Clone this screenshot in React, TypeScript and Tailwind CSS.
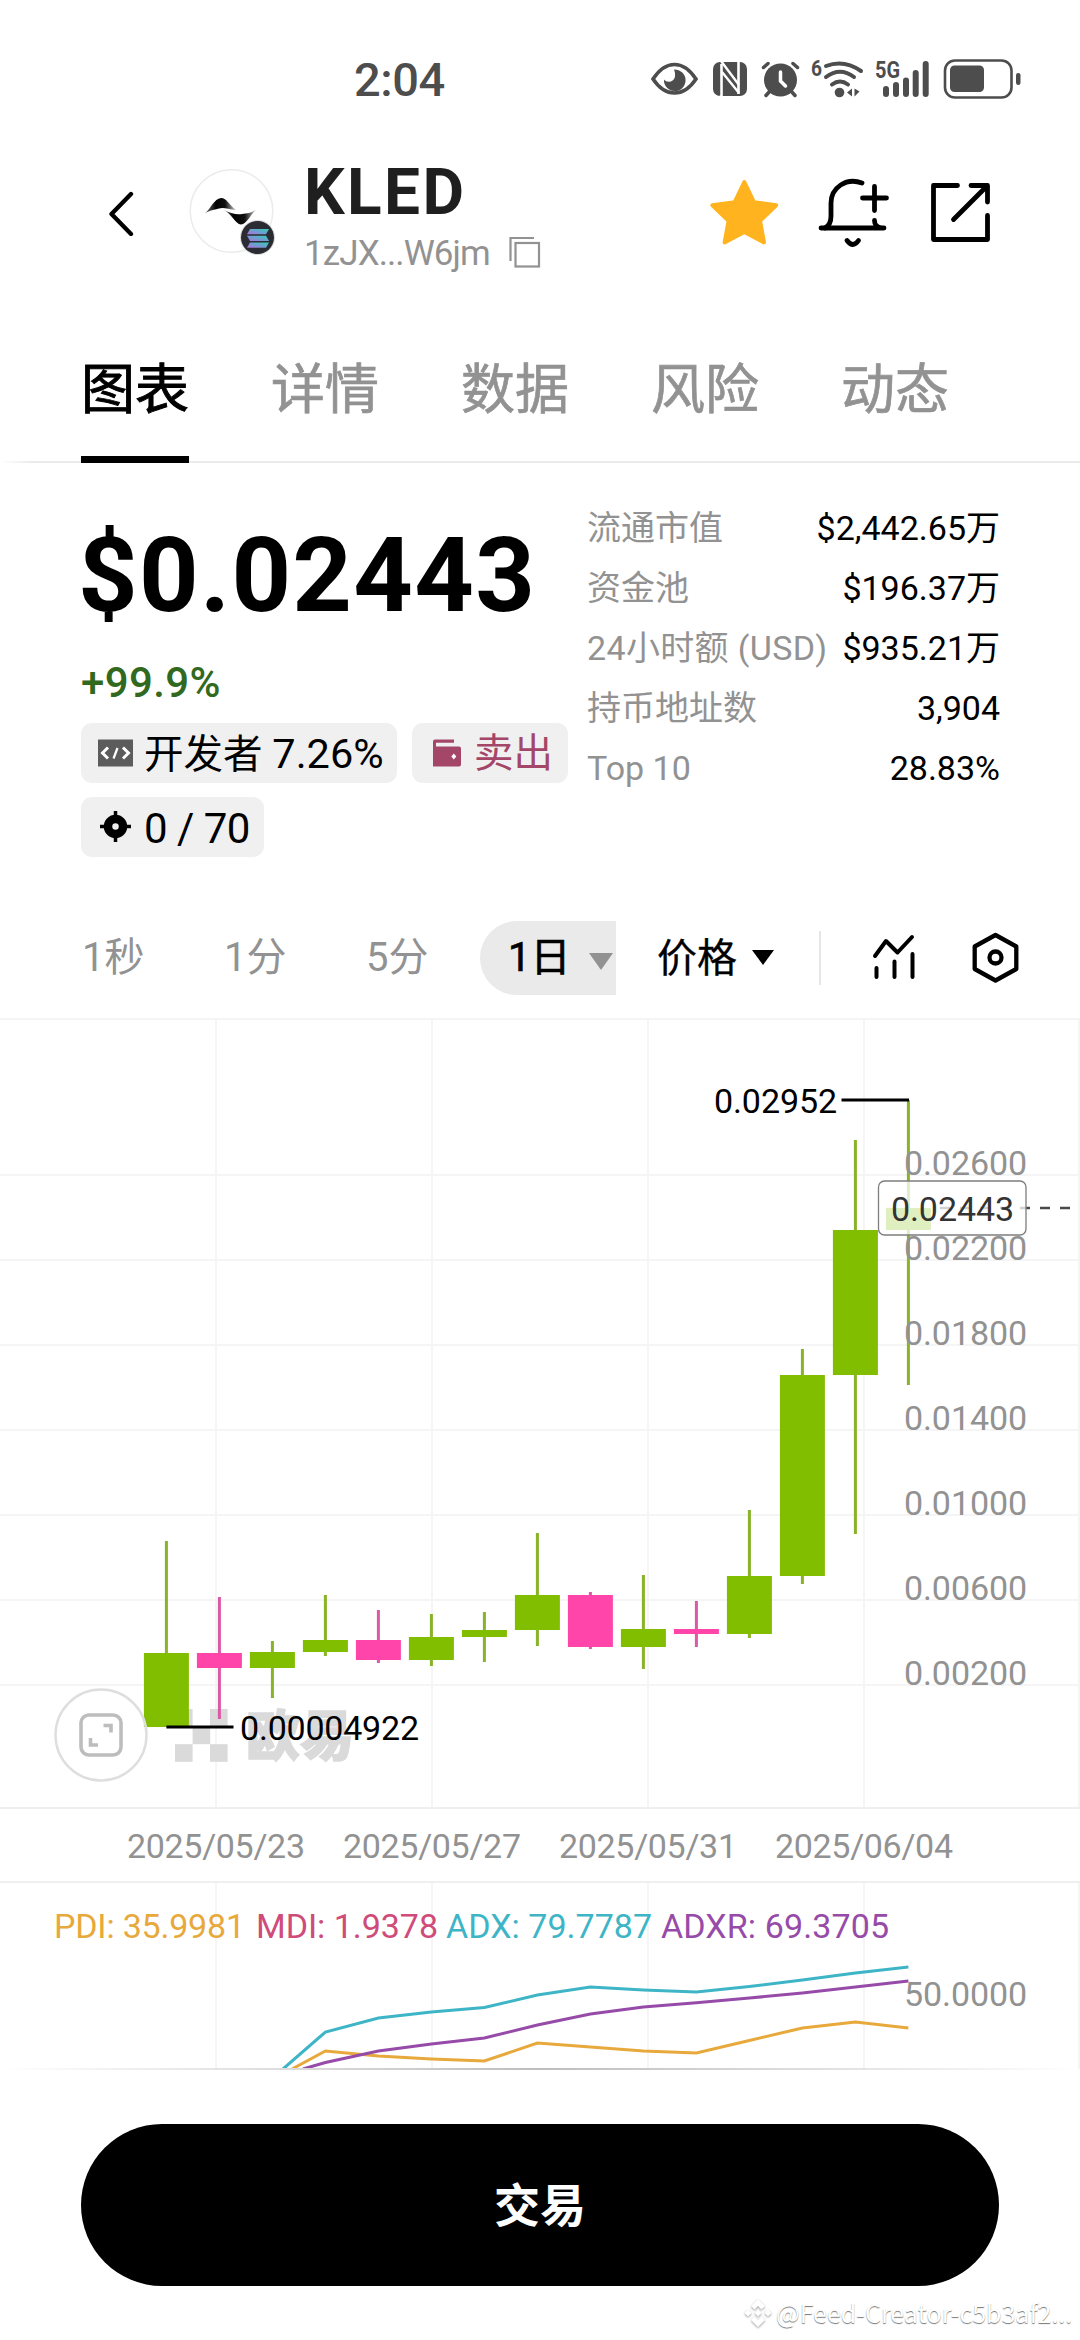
import type { ReactNode } from 'react';

const tabs = ['图表', '详情', '数据', '风险', '动态'];

const stats: { label: ReactNode; value: string; unit?: string }[] = [
  { label: '流通市值', value: '$2,442.65', unit: '万' },
  { label: '资金池', value: '$196.37', unit: '万' },
  { label: <span className="tracking-[0.35px]">24小时额 (USD)</span>, value: '$935.21', unit: '万' },
  { label: '持币地址数', value: '3,904' },
  { label: 'Top 10', value: '28.83%' },
];

// high, body top, body bottom, low, up
const candles: [number, number, number, number, boolean][] = [
  [1541, 1653, 1727, 1727, true],
  [1597, 1653, 1668, 1719, false],
  [1641, 1652, 1668, 1698, true],
  [1595, 1640, 1652, 1656, true],
  [1610, 1640, 1660, 1663, false],
  [1614, 1637, 1660, 1666, true],
  [1612, 1630, 1637, 1662, true],
  [1533, 1595, 1630, 1646, true],
  [1592, 1595, 1647, 1649, false],
  [1575, 1629, 1647, 1669, true],
  [1601, 1629, 1634, 1647, false],
  [1510, 1576, 1634, 1638, true],
  [1349, 1375, 1576, 1584, true],
  [1140, 1230, 1375, 1534, true],
  [1100, 1208, 1230, 1385, true],
];

const candleX = (i: number) => 166.4 + i * 53;

const priceTicks = ['0.02600', '0.02200', '0.01800', '0.01400', '0.01000', '0.00600', '0.00200'];
const gridX = [216, 432, 648, 864, 1079];
const dates = ['2025/05/23', '2025/05/27', '2025/05/31', '2025/06/04'];

const legend = [
  { text: 'PDI: 35.9981', x: 54, width: 191, color: '#e8a93c' },
  { text: 'MDI: 1.9378', x: 256, width: 182, color: '#cf4b79' },
  { text: 'ADX: 79.7787', x: 446, width: 206, color: '#3eb5c6' },
  { text: 'ADXR: 69.3705', x: 661, width: 228, color: '#974ba8' },
];

const adx = [2032, 2018, 2012, 2007.5, 1995, 1987, 1990, 1992, 1986.5, 1980, 1973, 1967];
const adxr = [2062.5, 2051, 2044, 2038, 2025, 2014, 2007, 2002.7, 1998, 1993, 1987, 1981];
const pdi = [2051, 2056, 2059, 2061, 2043, 2047, 2051, 2053, 2040.5, 2028, 2022, 2028];

const toPoints = (startX: number, ys: number[]) =>
  [`${startX},2069`, ...ys.map((y, i) => `${candleX(i + 3)},${y}`)].join(' ');

function StatusBar() {
  return (
    <div className="mt-[53px] flex h-[54px] items-center pl-[354px] text-[#4d4d4d]">
      <div className="w-[297px] text-[47px] font-medium leading-[54px] tracking-[-0.400px]">2:04</div>
      <svg className="h-[54px] w-[48px]" viewBox="651 53 48 54" fill="none">
        <path d="M653 79c6-9 13-14.500 21.500-14.500S690 70 696 79c-6 9-13 14-21.500 14S659 88 653 79Z" stroke="currentColor" strokeWidth="3.600" />
        <path d="M674 69.500a10.800 10.800 0 1 1-10 10c3 4 10 2.500 11-3 .4-3-.3-5-1-7Z" fill="currentColor" />
      </svg>
      <svg className="ml-[13px] h-[54px] w-[36px]" viewBox="712 53 36 54">
        <rect x="713" y="62" width="34" height="34" rx="7" fill="currentColor" />
        <path d="M721.500 64v32l-1.500.5M738.500 62v32" stroke="#fff" strokeWidth="2.600" />
        <path d="M721 61l18 24M722 72l17 21" stroke="#fff" strokeWidth="2.400" />
      </svg>
      <svg className="ml-[13px] h-[54px] w-[40px]" viewBox="761 53 40 54" fill="none" stroke="currentColor" strokeLinecap="round">
        <circle cx="780.500" cy="80" r="16.500" fill="currentColor" stroke="none" />
        <path d="M763.500 67.500l4.500-4M797.500 67.500l-4.500-4M770 91l-4 4.500M791 91l4 4.500" strokeWidth="3.500" />
        <path d="M780.500 72v9l5 5" stroke="#fff" strokeWidth="3.500" />
      </svg>
      <svg className="ml-[10px] h-[54px] w-[54px]" viewBox="811 53 54 54" fill="none" stroke="currentColor" strokeWidth="4" strokeLinecap="round">
        <text x="811" y="76" fontSize="22" fontWeight="700" fill="currentColor" stroke="none" textLength="11" lengthAdjust="spacingAndGlyphs">6</text>
        <path d="M826 66q18-7 35 5M826 77q14-10.500 28 0M832 84.500q8-6 16 0" />
        <circle cx="839.500" cy="92.500" r="4.800" fill="currentColor" stroke="none" />
        <path d="M852 88.500v8l-5-4zM854.500 88.500v8l5-5z" fill="currentColor" stroke="none" />
      </svg>
      <svg className="ml-[10px] h-[54px] w-[55px]" viewBox="875 53 55 54" fill="currentColor">
        <text x="875" y="78" fontSize="23" fontWeight="700" textLength="25" lengthAdjust="spacingAndGlyphs">5G</text>
        <rect x="883" y="86" width="6" height="11" rx="3" />
        <rect x="893" y="82" width="6" height="15" rx="3" />
        <rect x="903" y="77.500" width="6" height="19.500" rx="3" />
        <rect x="912.700" y="70" width="6" height="27" rx="3" />
        <rect x="922.700" y="61" width="6" height="36" rx="3" />
      </svg>
      <svg className="ml-[13px] h-[54px] w-[78px]" viewBox="943 53 78 54" fill="none">
        <rect x="945" y="60.500" width="66.500" height="37" rx="10" stroke="currentColor" strokeWidth="2.600" />
        <rect x="950" y="65.500" width="34" height="26.500" rx="4.500" fill="currentColor" />
        <rect x="1016" y="73" width="4.500" height="12" rx="2.200" fill="currentColor" />
      </svg>
    </div>
  );
}

function TokenLogo() {
  return (
    <svg className="h-[90px] w-[90px]" viewBox="187 165 90 90" fill="none">
      <defs>
        <linearGradient id="sol" x1="0" y1="1" x2="1" y2="0">
          <stop offset="0" stopColor="#b26fd8" />
          <stop offset="0.500" stopColor="#6c9fd0" />
          <stop offset="1" stopColor="#2fd0b5" />
        </linearGradient>
        <linearGradient id="waveA" x1="0" y1="0" x2="1" y2="0">
          <stop offset="0" stopColor="#777" />
          <stop offset="0.350" stopColor="#000" />
          <stop offset="0.650" stopColor="#111" />
          <stop offset="1" stopColor="#ccc" />
        </linearGradient>
        <linearGradient id="waveB" x1="1" y1="0" x2="0" y2="0">
          <stop offset="0" stopColor="#ccc" />
          <stop offset="0.350" stopColor="#111" />
          <stop offset="0.700" stopColor="#000" />
          <stop offset="1" stopColor="#666" />
        </linearGradient>
      </defs>
      <circle cx="231.500" cy="211" r="41.300" fill="#fff" stroke="#ebebeb" strokeWidth="1.500" />
      <path d="M205 213.500C211 208 214 199 221 198c6 0 8 7 15 12-8-1-13-3-17-1.500-5 1.500-9 1.500-14 5Z" fill="url(#waveA)" />
      <path d="M224 210c6 3 12 5 18 4 5-.5 9-1 14-4-6 5-9 14-15 14.500C235 224 232 214 224 210Z" fill="url(#waveB)" />
      <circle cx="257.500" cy="237.500" r="17.500" fill="#d9d9d9" />
      <circle cx="257.500" cy="237.500" r="16.500" fill="#2a2b33" />
      <g fill="url(#sol)">
        <path d="M250 229h19l-3 5.300h-19z" />
        <path d="M247 235.700h19l3 5.300h-19z" />
        <path d="M250 242.400h19l-3 5.300h-19z" />
      </g>
    </svg>
  );
}

function Header() {
  return (
    <header className="mt-[53px] flex h-[100px] items-center pl-[105px]">
      <svg className="h-[52px] w-[32px]" viewBox="105 184 32 52" fill="none" stroke="#000" strokeWidth="4.300" strokeLinecap="round" strokeLinejoin="round">
        <path d="M131 194l-19.500 20L131 234" />
      </svg>
      <div className="ml-[50px]">
        <TokenLogo />
      </div>
      <div className="ml-[27px] mt-[22px] w-[279px]">
        <div className="h-[66px] text-[64px] font-bold leading-[66px] tracking-[2.400px] text-[#1f1f1f]">KLED</div>
        <div className="flex h-[56px] items-center text-[#929292]">
          <span className="w-[204px] text-[35px] leading-[56px] tracking-[-0.900px]">1zJX...W6jm</span>
          <svg className="-mt-[4px] h-[34px] w-[34px]" viewBox="508 236 34 34" fill="none" stroke="currentColor" strokeWidth="2.200">
            <path d="M510.500 262v-23H534" />
            <rect x="515.500" y="244" width="23.500" height="23.500" />
          </svg>
        </div>
      </div>
      <svg className="ml-[123px] h-[80px] w-[76px]" viewBox="704 170 76 80">
        <path d="M742.300 182l9.600 20.200 22.300 3-16.200 15.600 4 21.600-19.700-10.300-19.700 10.300 4-21.600-16.200-15.600 22.300-3z" fill="#ffb31f" stroke="#ffb31f" strokeWidth="4" strokeLinejoin="round" />
      </svg>
      <svg className="ml-[34px] h-[80px] w-[76px]" viewBox="814 170 76 80" fill="none" stroke="#000" strokeWidth="4.800" strokeLinecap="round" strokeLinejoin="round">
        <path d="M860 183c-16-6-31 5-31 20v13c0 6-2 10-6 12" />
        <path d="M819 228h63M872.500 220.500c0 4 2.500 7 7 7.500" />
        <path d="M872.500 186.500v24M860.500 198h24" />
        <path d="M845 240.500q6 8 11.500 0" />
      </svg>
      <svg className="ml-[36px] h-[80px] w-[66px]" viewBox="926 170 66 80" fill="none" stroke="#000" strokeWidth="4.800" strokeLinecap="round" strokeLinejoin="round">
        <path d="M955.500 185.500h-24v54h54v-24" />
        <path d="M969 185.500h16.500v16.500M985 186l-33.500 33.500" />
      </svg>
    </header>
  );
}

function TabBar() {
  return (
    <nav className="relative mt-[90px] flex h-[113px] gap-[82px] pl-[81px]">
      {tabs.map((tab, i) => (
        <div key={tab} className="flex h-full w-[108px] flex-col justify-between">
          <span
            className={
              i === 0
                ? 'text-[54px] leading-[82px] text-black [-webkit-text-stroke:0.900px_#000]'
                : 'text-[54px] leading-[82px] text-[#929292] [-webkit-text-stroke:0.700px_#929292]'
            }
          >
            {tab}
          </span>
          {i === 0 && <span className="relative z-10 h-[7px] w-[108px] bg-black" />}
        </div>
      ))}
      <div className="absolute bottom-0 left-0 h-[2px] w-full bg-linear-to-r from-transparent via-[#ebebeb] via-[3%] to-[#ebebeb]" />
    </nav>
  );
}

function Summary() {
  return (
    <section className="flex h-[458px] pl-[81px]">
      <div className="w-[506px]">
        <div className="-ml-[3px] mt-[57px] h-[112px] whitespace-nowrap text-[104px] font-bold leading-[112px] tracking-[1.300px] text-black">$0.02443</div>
        <div className="mt-[26px] h-[50px] text-[42px] font-medium leading-[50px] tracking-[0.400px] text-[#31691e]">+99.9%</div>
        <div className="mt-[15px] flex gap-[15px]">
          <div className="flex h-[60px] w-[316px] items-center rounded-[11px] bg-[#f0f0f0] pl-[17px]">
            <svg className="h-[30px] w-[35px]" viewBox="0 0 35 30" fill="none">
              <rect y="1.500" width="35" height="27" fill="#5c5c5c" />
              <path d="M10 9.500L4.500 15l5.500 5.500M25 9.500l5.500 5.500-5.500 5.500" stroke="#fff" strokeWidth="3" />
              <path d="M19.500 10l-4 10.500" stroke="#fff" strokeWidth="2.200" />
            </svg>
            <span className="ml-[11px] mt-[2px] whitespace-nowrap text-[39.500px] leading-[60px] text-black">
              开发者 <span className="text-[41.500px]">7.26%</span>
            </span>
          </div>
          <div className="flex h-[60px] w-[156px] items-center rounded-[11px] bg-[#f0f0f0] pl-[20px] text-[#a34668]">
            <svg className="h-[30px] w-[30px]" viewBox="0 0 30 30">
              <path d="M1 3.500A2 2 0 0 1 3 1.500h19v3.300H4v3.700h23a2 2 0 0 1 2 2v16a2 2 0 0 1-2 2H1z" fill="currentColor" />
              <path d="M21.800 15.500l2.500 3-2.500 3-2.500-3z" fill="#fff" />
            </svg>
            <span className="ml-[12px] mt-[2px] text-[39.500px] leading-[60px]">卖出</span>
          </div>
        </div>
        <div className="mt-[14px] flex h-[60px] w-[183px] items-center rounded-[11px] bg-[#f0f0f0] pl-[18px]">
          <svg className="h-[34px] w-[34px]" viewBox="0 0 34 34" fill="none" stroke="#000">
            <circle cx="16.500" cy="16.500" r="7.500" strokeWidth="8.500" />
            <path d="M16.500 1v6M16.500 26v6M1 16.500h6M26 16.500h6" strokeWidth="3.500" />
          </svg>
          <span className="ml-[11px] mt-[3px] whitespace-nowrap text-[42px] leading-[60px] tracking-[-0.500px] text-black">0 / 70</span>
        </div>
      </div>
      <div className="mt-[35px] w-[413px]">
        {stats.map((row) => (
          <div key={row.value} className="flex h-[60px] items-center justify-between whitespace-nowrap text-[34px] leading-[60px]">
            <span className="text-[#929292]">{row.label}</span>
            <span className="text-black">
              {row.value}
              {row.unit}
            </span>
          </div>
        ))}
      </div>
    </section>
  );
}

function IntervalBar() {
  return (
    <div className="flex h-[74px] items-center text-[40px] leading-[74px] text-[#929292]">
      <span className="ml-[82px] w-[142px]">1秒</span>
      <span className="w-[142px]">1分</span>
      <span className="w-[114px]">5分</span>
      <div className="flex h-[74px] w-[136px] items-center rounded-l-full bg-[#eaeaea] pl-[28px]">
        <span className="w-[81px] text-black [-webkit-text-stroke:0.700px_#000]">1日</span>
        <svg className="mt-[7px] h-[18px] w-[24px]" viewBox="0 0 24 18">
          <path d="M0 0h24L12 17z" fill="#929292" />
        </svg>
      </div>
      <span className="ml-[41px] mt-[2px] w-[95px] text-black [-webkit-text-stroke:0.300px_#000]">价格</span>
      <svg className="h-[16px] w-[22px]" viewBox="0 0 22 16">
        <path d="M0 0h22L11 15z" fill="#000" />
      </svg>
      <div className="ml-[45px] h-[54px] w-[2px] bg-[#e6e6e6]" />
      <svg className="ml-[49px] h-[54px] w-[48px]" viewBox="870 931 48 54" fill="none" stroke="#000" strokeWidth="4" strokeLinecap="round" strokeLinejoin="round">
        <path d="M875 956l11-15 11.500 11.500L912 937M876.500 968v9M894.500 961.500v15.500M912.500 954v23" />
      </svg>
      <svg className="ml-[51px] h-[54px] w-[54px]" viewBox="969 931 54 54" fill="none" stroke="#000" strokeWidth="4.300" strokeLinejoin="round">
        <path d="M995.500 935l20.800 11.500v22.500l-20.800 11.500L974.700 969v-22.500z" />
        <circle cx="995.500" cy="957.500" r="6" />
      </svg>
    </div>
  );
}

function Chart() {
  return (
    <svg className="mt-[23px] block h-[1054px] w-[1080px]" viewBox="0 1018 1080 1054" fontSize="34">
      <defs>
        <linearGradient id="fade" x1="0" y1="0" x2="1" y2="0">
          <stop offset="0" stopColor="#bdbdbd" stopOpacity="0" />
          <stop offset="0.500" stopColor="#bdbdbd" />
          <stop offset="1" stopColor="#bdbdbd" stopOpacity="0" />
        </linearGradient>
        <clipPath id="indicator">
          <rect x="0" y="1882" width="1080" height="186" />
        </clipPath>
      </defs>

      {/* grid */}
      <g fill="#f5f5f5">
        {[1018, ...priceTicks.map((_, i) => 1174 + i * 85)].map((y) => (
          <rect key={y} x="0" y={y} width="1080" height="2" />
        ))}
        {gridX.map((x) => (
          <g key={x}>
            <rect x={x - 1} y="1019" width="2" height="789" />
            <rect x={x - 1} y="1883" width="2" height="186" />
          </g>
        ))}
      </g>
      <path d="M0 1808h1080M0 1882h1080" stroke="#efefef" strokeWidth="2" />

      {/* watermark */}
      <g fill="#dadada">
        <rect x="175" y="1709" width="17.600" height="17.600" />
        <rect x="210" y="1709" width="17.600" height="17.600" />
        <rect x="192.600" y="1726.600" width="17.600" height="17.600" />
        <rect x="175" y="1744.200" width="17.600" height="17.600" />
        <rect x="210" y="1744.200" width="17.600" height="17.600" />
        <text x="246" y="1756" fontSize="54" fontWeight="900" stroke="#dadada" strokeWidth="1.500">欧易</text>
      </g>

      {/* candles */}
      {candles.map(([high, top, bottom, low, up], i) => (
        <g key={i}>
          <rect x={candleX(i) - 1.500} y={high} width="3" height={low - high} fill={up ? '#89b328' : '#dc59a6'} />
          <rect x={candleX(i) - 22.500} y={top} width="45" height={bottom - top} fill={up ? '#82be00' : '#ff45aa'} />
        </g>
      ))}

      <circle cx="101" cy="1735" r="45.500" fill="#fff" fillOpacity="0.200" stroke="#dedede" strokeWidth="2.400" />
      <g fill="none" stroke="#bdbdbd" strokeWidth="3.600">
        <rect x="81" y="1715" width="40" height="40" rx="8" />
        <path d="M103.500 1725.500h7.500v7M98 1745h-7.500v-7" />
      </g>

      {/* high / low marks */}
      <path d="M841.500 1100H909M166.400 1727H233.500" stroke="#000" strokeWidth="3" />
      <text x="714" y="1112.500" textLength="123">0.02952</text>
      <text x="240" y="1740" textLength="179">0.00004922</text>

      <g fill="#929292">
        {priceTicks.map((tick, i) => (
          <text key={tick} x="904" y={1175 + i * 85} textLength="123">{tick}</text>
        ))}
        {dates.map((date, i) => (
          <text key={date} x={gridX[i]} y="1857.500" textAnchor="middle" textLength="178">{date}</text>
        ))}
        <text x="904" y="2006" textLength="123">50.0000</text>
      </g>

      {/* last price */}
      <path d="M940 1208H1074" stroke="#4a4a4a" strokeWidth="2.600" strokeDasharray="10 10" />
      <rect x="878.500" y="1181" width="147.500" height="54" rx="6" fill="#fff" fillOpacity="0.750" stroke="#7d7d7d" strokeWidth="1.300" />
      <text x="891" y="1220.500" textLength="123" fill="#333">0.02443</text>

      {legend.map((item) => (
        <text key={item.text} x={item.x} y="1938" textLength={item.width} fill={item.color}>{item.text}</text>
      ))}
      <g clipPath="url(#indicator)" fill="none" strokeWidth="3">
        <polyline points={toPoints(283, adx)} stroke="#3eb5c6" />
        <polyline points={toPoints(292, pdi)} stroke="#e8a93c" />
        <polyline points={toPoints(303, adxr)} stroke="#974ba8" />
      </g>
      <rect x="0" y="2068" width="1080" height="2" fill="url(#fade)" />
    </svg>
  );
}

export default function App() {
  return (
    <main className="relative flex h-[2340px] w-[1080px] flex-col overflow-hidden bg-white font-['Roboto','Noto_Sans_CJK_SC',sans-serif]">
      <StatusBar />
      <Header />
      <TabBar />
      <Summary />
      <IntervalBar />
      <Chart />
      <button className="mt-[52px] ml-[81px] h-[162px] w-[918px] rounded-full bg-black pt-[3px] text-[46px] font-bold leading-[159px] text-white">交易</button>
      <div className="absolute bottom-[10px] left-[744px] flex items-center gap-[4px]">
        <svg className="h-[30px] w-[28px] drop-shadow-[0_1px_1px_#999]" viewBox="0 0 28 30" fill="#fff">
          <path d="M14 1l7 7-3.500 3.500L14 8l-3.500 3.500L7 8zM14 29l7-7-3.500-3.500L14 22l-3.500-3.500L7 22zM14 11.500l3.500 3.500-3.500 3.500-3.500-3.500zM4 11.500L7.500 15 4 18.500.5 15zM24 11.500l3.500 3.500-3.500 3.500-3.500-3.500z" />
        </svg>
        <span className="mb-[2px] font-['Noto_Sans_CJK_SC',sans-serif] text-[25px] leading-[32px] whitespace-nowrap text-white [text-shadow:0_1px_1px_#777]">@Feed-Creator-c5b3af2...</span>
      </div>
    </main>
  );
}
